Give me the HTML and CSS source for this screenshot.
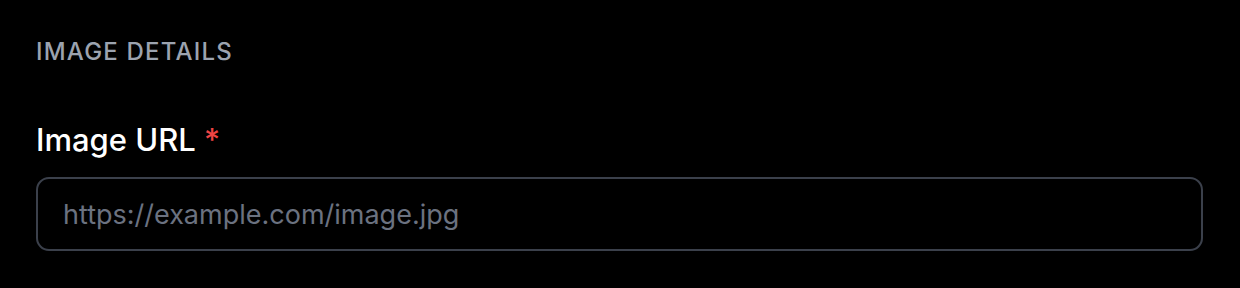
FILE: index.html
```html
<!DOCTYPE html>
<html lang="en">
<head>
    <meta charset="UTF-8">
    <meta name="viewport" content="width=device-width, initial-scale=1.0">
    <title>Image details</title>
    <link rel="stylesheet" href="styles.css">
</head>
<body>
    <section class="panel">
        <h3 class="section-title">Image Details</h3>
        <div class="field">
            <label class="field-label" for="image-url">Image URL <span class="required">*</span></label>
            <input class="field-input" id="image-url" type="text" placeholder="https://example.com/image.jpg">
        </div>
    </section>
</body>
</html>
```

FILE: styles.css
```css
body {
    margin: 0;
    background-color: #000;
    font-family: Inter, "Noto Sans", sans-serif;
}

.panel {
    padding: 36px 37px 36px 36px;
}

.section-title {
    margin: 0;
    font-size: 24px;
    line-height: 32px;
    font-weight: 500;
    letter-spacing: 0.05em;
    text-transform: uppercase;
    color: #9ca3af;
}

.field {
    margin-top: 48px;
}

.field-label {
    display: block;
    margin-bottom: 13px;
    font-size: 31px;
    line-height: 48px;
    font-weight: 500;
    color: #fff;
}

.required {
    color: #ef4444;
}

.field-input {
    display: block;
    box-sizing: border-box;
    width: 100%;
    height: 74px;
    padding: 0 25px;
    background-color: #000;
    border: 2px solid #3b404b;
    border-radius: 13px;
    font-family: inherit;
    font-size: 27px;
    color: #fff;
    outline: none;
}

.field-input::placeholder {
    color: #6b7280;
}
```
